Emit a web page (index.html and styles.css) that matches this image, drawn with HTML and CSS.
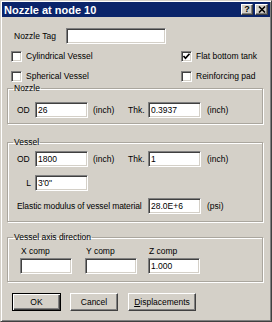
FILE: index.html
```html
<!DOCTYPE html>
<html lang="en">
<head>
    <meta charset="UTF-8">
    <meta name="viewport" content="width=device-width, initial-scale=1.0">
    <title>Nozzle at node 10</title>
    <link rel="stylesheet" href="styles.css">
</head>
<body>
    <div class="window">
        <div class="titlebar">
            <span class="title">Nozzle at node 10</span>
            <div class="caption-btns">
                <span class="cap-btn">?</span>
                <span class="cap-btn cap-close">
                    <svg width="8" height="7" viewBox="0 0 8 7"><path d="M1 0.5 L7 6.5 M7 0.5 L1 6.5" stroke="#000" stroke-width="1.6"/></svg>
                </span>
            </div>
        </div>
        <div class="content">
            <div class="tag-row">
                <label for="tag" class="tag-label">Nozzle Tag</label>
                <input type="text" id="tag" class="field tag-input">
            </div>
            <div class="check-row first">
                <label class="check left"><span class="box"></span>Cylindrical Vessel</label>
                <label class="check"><span class="box"><svg width="9" height="9" viewBox="0 0 9 9"><path d="M1.5 4 L3.5 6.2 L7.5 1.8" fill="none" stroke="#000" stroke-width="1.7"/></svg></span>Flat bottom tank</label>
            </div>
            <div class="check-row second">
                <label class="check left"><span class="box"></span>Spherical Vessel</label>
                <label class="check"><span class="box"></span>Reinforcing pad</label>
            </div>

            <fieldset class="group nozzle">
                <legend>Nozzle</legend>
                <div class="dim-row">
                    <span class="lbl">OD</span>
                    <input type="text" class="field" value="26">
                    <span class="unit">(inch)</span>
                    <span class="thk">Thk.</span>
                    <input type="text" class="field" value="0.3937">
                    <span class="unit2">(inch)</span>
                </div>
            </fieldset>

            <fieldset class="group vessel">
                <legend>Vessel</legend>
                <div class="dim-row">
                    <span class="lbl">OD</span>
                    <input type="text" class="field" value="1800">
                    <span class="unit">(inch)</span>
                    <span class="thk">Thk.</span>
                    <input type="text" class="field" value="1">
                    <span class="unit2">(inch)</span>
                </div>
                <div class="dim-row l-row">
                    <span class="lbl lbl-right">L</span>
                    <input type="text" class="field" value="3'0&quot;">
                </div>
                <div class="dim-row e-row">
                    <span class="lbl-long">Elastic modulus of vessel material</span>
                    <input type="text" class="field" value="28.0E+6">
                    <span class="unit2">(psi)</span>
                </div>
            </fieldset>

            <fieldset class="group axis">
                <legend>Vessel axis direction</legend>
                <div class="axis-cols">
                    <div class="axis-col">
                        <span class="axis-lbl">X comp</span>
                        <input type="text" class="field">
                    </div>
                    <div class="axis-col">
                        <span class="axis-lbl">Y comp</span>
                        <input type="text" class="field">
                    </div>
                    <div class="axis-col">
                        <span class="axis-lbl">Z comp</span>
                        <input type="text" class="field" value="1.000">
                    </div>
                </div>
            </fieldset>

            <div class="buttons">
                <button class="btn btn-default">OK</button>
                <button class="btn btn-cancel">Cancel</button>
                <button class="btn btn-disp"><u>D</u>isplacements</button>
            </div>
        </div>
    </div>
</body>
</html>
```

FILE: styles.css
```css
*{
    margin: 0;
    padding: 0;
    box-sizing: border-box;
}

body{
    width: 272px;
    height: 322px;
    background: #d4d0c8;
    font-family: "Liberation Sans", Arial, sans-serif;
    font-size: 8.5px;
    color: #000;
}

.window{
    width: 272px;
    height: 322px;
    background: #d4d0c8;
    border: 1px solid;
    border-color: #d4d0c8 #404040 #404040 #d4d0c8;
    box-shadow: inset 1px 1px 0 #fff, inset -1px -1px 0 #808080;
    padding: 1px;
}

.titlebar{
    height: 15px;
    background: #0a246a;
    display: flex;
    align-items: center;
    justify-content: space-between;
    padding: 0 2px 0 2px;
}

.title{
    color: #fff;
    font-weight: 700;
    font-size: 11px;
}

.caption-btns{
    display: flex;
    gap: 2px;
}

.cap-btn{
    width: 12px;
    height: 11px;
    background: #d4d0c8;
    border: 1px solid;
    border-color: #fff #404040 #404040 #fff;
    box-shadow: inset -1px -1px 0 #808080;
    display: flex;
    align-items: center;
    justify-content: center;
    font-weight: 700;
    font-size: 9px;
    line-height: 9px;
}

.cap-close{
    width: 13px;
}

.content{
    padding: 11px 7px 0 5px;
}

.field{
    width: 53px;
    height: 16px;
    border: 1px solid;
    border-color: #808080 #fff #fff #808080;
    box-shadow: inset 1px 1px 0 #404040, inset -1px -1px 0 #d4d0c8;
    background: #fff;
    font-family: "Liberation Sans", Arial, sans-serif;
    font-size: 8.5px;
    color: #000;
    padding: 0 2px;
    outline: none;
}

.tag-row{
    display: flex;
    align-items: center;
    padding-left: 7px;
}

.tag-label{
    width: 52px;
}

.tag-input{
    width: 100px;
}

.check-row{
    display: flex;
    align-items: center;
    height: 12px;
}

.check-row.first{
    margin-top: 6px;
}

.check-row.second{
    margin-top: 8px;
}

.check{
    display: flex;
    align-items: center;
    gap: 4px;
    white-space: nowrap;
}

.check.left{
    width: 170px;
    margin-left: 4px;
}

.box{
    width: 11px;
    height: 11px;
    background: #fff;
    border: 1px solid;
    border-color: #808080 #fff #fff #808080;
    box-shadow: inset 1px 1px 0 #404040, inset -1px -1px 0 #d4d0c8;
    display: flex;
    align-items: center;
    justify-content: center;
}

.group{
    border: 1px solid #aaa69e;
    box-shadow: 1px 1px 0 #fff, inset 1px 1px 0 #fff;
    padding: 0 8px 0 9px;
}

.group legend{
    margin-left: -4px;
    padding: 0 1px;
    line-height: 10px;
    height: 10px;
}

.nozzle{
    margin-top: 1px;
    padding-top: 9px;
    padding-bottom: 5px;
}

.vessel{
    margin-top: 13px;
    padding-top: 4px;
    padding-bottom: 7px;
}

.axis{
    margin-top: 10px;
    padding-top: 4px;
    padding-bottom: 7px;
}

.dim-row{
    display: flex;
    align-items: center;
    height: 16px;
    white-space: nowrap;
}

.lbl{
    width: 18px;
}

.lbl-right{
    text-align: right;
    padding-right: 4px;
}

.unit{
    width: 35px;
    margin-left: 5px;
}

.thk{
    width: 20px;
}

.unit2{
    margin-left: 6px;
}

.l-row{
    margin-top: 8px;
}

.e-row{
    margin-top: 7px;
}

.lbl-long{
    width: 131px;
    letter-spacing: -0.1px;
}

.axis-cols{
    display: flex;
    padding-left: 3px;
}

.axis-col{
    display: flex;
    flex-direction: column;
    gap: 2px;
    width: 52px;
}

.axis-col + .axis-col{
    margin-left: 13px;
}

.axis-col:last-child{
    margin-left: 11px;
}

.axis-lbl{
    line-height: 10px;
    padding-left: 1px;
}

.axis-col .field{
    width: 52px;
}

.buttons{
    display: flex;
    margin-top: 11px;
    padding-left: 5px;
}

.btn{
    height: 18px;
    background: #d4d0c8;
    border: 1px solid;
    border-color: #fff #404040 #404040 #fff;
    box-shadow: inset -1px -1px 0 #808080;
    font-family: "Liberation Sans", Arial, sans-serif;
    font-size: 8.5px;
    color: #000;
}

.btn-default{
    width: 49px;
    border-color: #000;
    box-shadow: inset 1px 1px 0 #fff, inset -1px -1px 0 #404040, inset -2px -2px 0 #808080;
}

.btn-cancel{
    width: 48px;
    margin-left: 9px;
}

.btn-disp{
    width: 68px;
    margin-left: 10px;
}
```
